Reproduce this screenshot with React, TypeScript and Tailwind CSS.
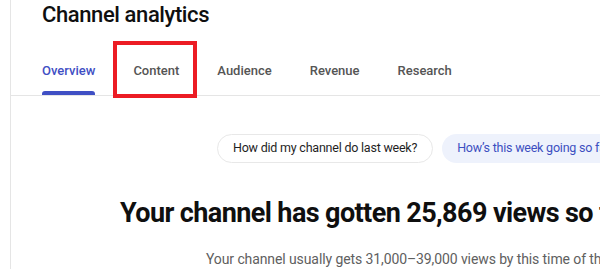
const tabs = ["Overview", "Content", "Audience", "Revenue", "Research"];

export default function App() {
  return (
    <div className="relative flex h-[269px] w-[600px] overflow-hidden bg-white font-['Roboto',sans-serif]">
      {/* left rail edge */}
      <div className="w-[11px] shrink-0 border-r border-[#e5e5e5]" />

      <main className="flex min-w-0 flex-1 flex-col">
        <header className="pl-[31px]">
          <h1 className="pt-[1px] text-[22px] leading-[28px] font-medium tracking-[-0.4px] text-[#0f0f0f]">
            Channel analytics
          </h1>
          <nav className="mt-[32px] flex gap-[38px]">
            {tabs.map((tab, i) => (
              <div key={tab} className="flex flex-col">
                <span
                  className={`text-[13px] leading-[20px] font-medium ${
                    i === 0 ? "text-[#3f4fc4]" : "text-[#555555]"
                  }`}
                >
                  {tab}
                </span>
                <div
                  className={`mt-[10px] h-[4px] rounded-t-[3px] ${
                    i === 0 ? "bg-[#3f4fc4]" : "bg-transparent"
                  }`}
                />
              </div>
            ))}
          </nav>
        </header>
        <div className="h-px bg-[#e5e5e5]" />

        <section className="flex flex-col whitespace-nowrap">
          <div className="mt-[38px] ml-[206px] flex gap-[9px]">
            <span className="flex h-[29px] items-center rounded-full border border-[#e8e8e8] px-[15px] text-[12.5px] tracking-[-0.22px] text-[#1f1f1f]">
              How did my channel do last week?
            </span>
            <span className="flex h-[29px] items-center rounded-full bg-[#eef2fc] px-[15px] text-[12.5px] tracking-[-0.22px] text-[#3c4fc1]">
              How’s this week going so far?
            </span>
          </div>

          <h2 className="mt-[33px] ml-[109px] text-[27px] leading-[34px] font-bold tracking-[-0.6px] text-[#0f0f0f]">
            Your channel has gotten 25,869 views so far
          </h2>

          <p className="mt-[19px] ml-[195px] text-[14px] leading-[20px] tracking-[-0.1px] text-[#606060]">
            Your channel usually gets 31,000–39,000 views by this time of the week
          </p>
        </section>
      </main>

      {/* highlight annotation */}
      <div className="absolute top-[41px] left-[113px] h-[57px] w-[84px] border-[4px] border-[#ec1c24]" />
    </div>
  );
}
